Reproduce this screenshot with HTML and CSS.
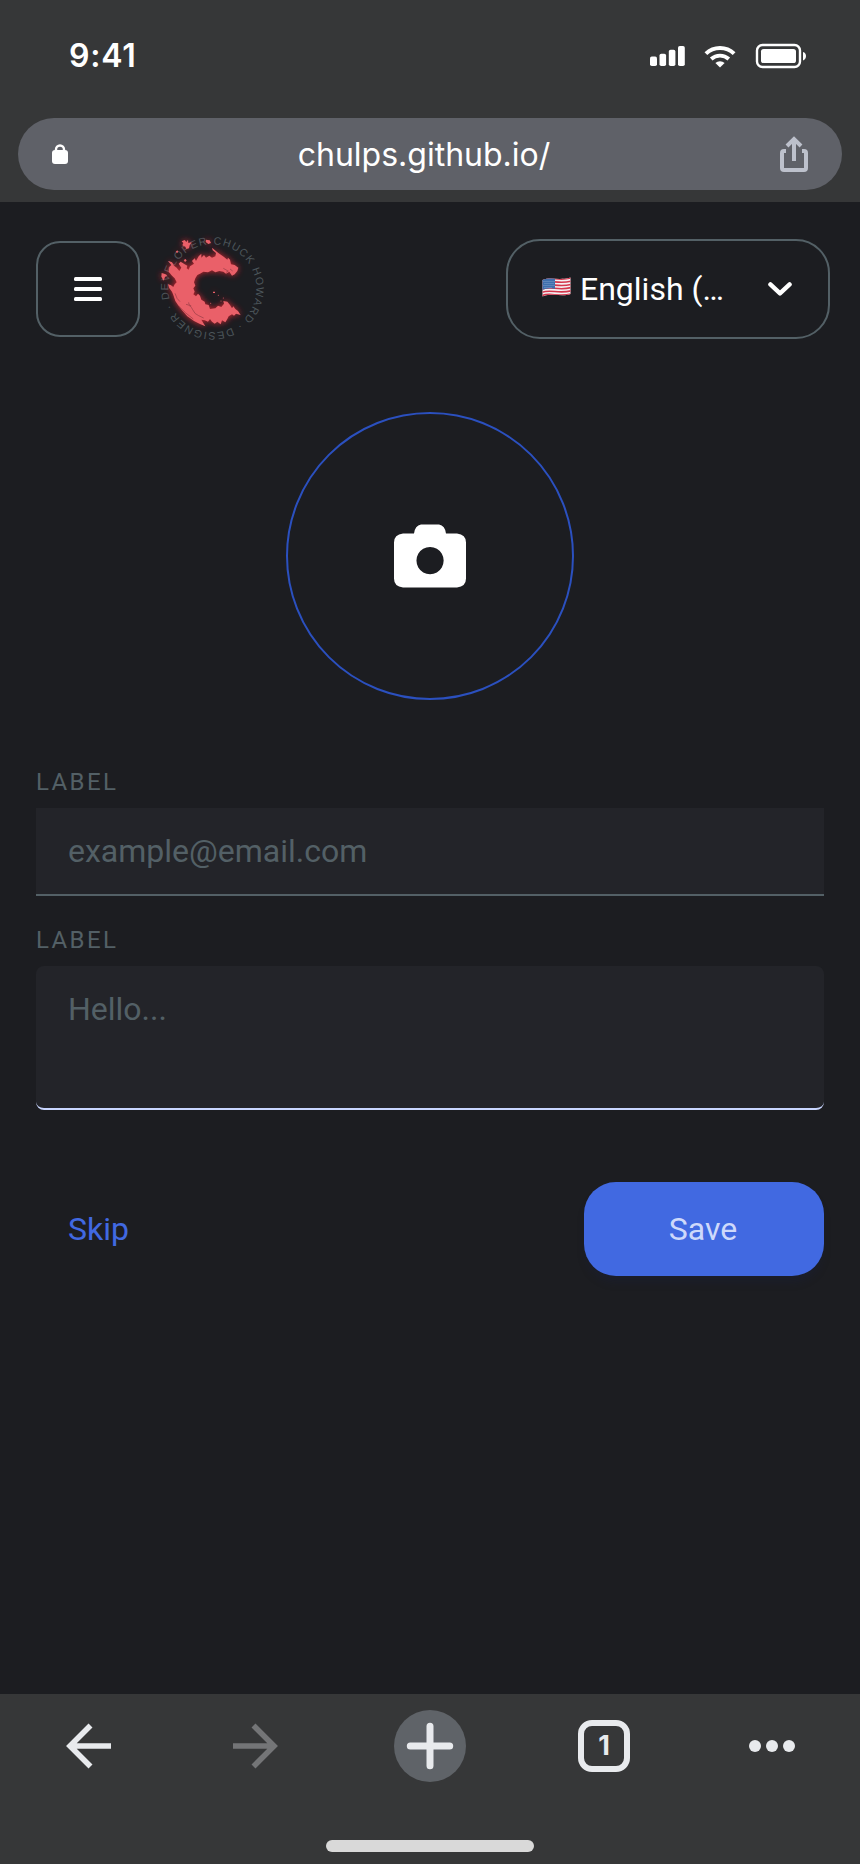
FILE: index.html
```html
<!DOCTYPE html>
<html lang="en">
<head>
<meta charset="utf-8">
<title>chulps.github.io</title>
<link rel="stylesheet" href="styles.css">
</head>
<body>
<div class="phone">
  <header class="browser-top">
    <div class="status">
      <span class="time">9:41</span>
      <svg class="status-icons" width="158" height="28" viewBox="0 0 158 28">
        <g fill="#fff">
          <rect x="0" y="14.6" width="7" height="9.4" rx="1.8"/>
          <rect x="9.5" y="11.8" width="6.6" height="12.2" rx="1.8"/>
          <rect x="18.8" y="7.8" width="6.6" height="16.2" rx="1.8"/>
          <rect x="28" y="4" width="6.8" height="20" rx="1.8"/>
          <path d="M70 25.6l-4.6-4.5a6.6 6.6 0 0 1 9.2 0z"/>
          <rect x="111" y="7" width="35" height="14" rx="2.6"/>
          <path d="M153 10c4 1 4 7.400 0 8.400z"/>
        </g>
        <g fill="none" stroke="#fff">
          <path d="M55.900 11.600a20.600 20.600 0 0 1 28.200 0" stroke-width="4"/>
          <path d="M61.200 17a13 13 0 0 1 17.600 0" stroke-width="3.800"/>
          <rect x="107" y="3" width="43" height="22" rx="5.500" stroke-width="2.400"/>
        </g>
      </svg>
    </div>
    <div class="url-bar">
      <svg width="16" height="20" viewBox="0 0 16 20"><rect y="6" width="16" height="14" rx="3" fill="#fff"/><path d="M4 8V5.500a4 4 0 0 1 8 0V8" fill="none" stroke="#fff" stroke-width="2.400"/></svg>
      <span class="url">chulps.github.io/</span>
      <svg width="28" height="36" viewBox="0 0 28 36" fill="none" stroke="#bdc1cc" stroke-width="4"><path d="M6 15H4q-2 0-2 2v15q0 2 2 2h20q2 0 2-2V17q0-2-2-2h-2M14 25V3M7 10l7-7 7 7"/></svg>
    </div>
  </header>

  <main class="page">
    <nav class="nav">
      <button class="menu" aria-label="Menu"><i></i><i></i><i></i></button>
      <svg class="logo" width="112" height="112" viewBox="18 21 336 336">
        <defs>
          <path id="ring" d="M187 58a132 132 0 1 1-.1 0"/>
          <filter id="glow" x="-30%" y="-30%" width="160%" height="160%"><feGaussianBlur stdDeviation="10"/></filter>
          <g id="splash">
            <path d="M186 68L205 84 222 96 232 104 234 98 240 104 243 118 254 120 265 128 262 138 254 148 246 152 238 140 228 146 220 140 208 138 196 142 186 136 174 142 160 140 150 146 142 150 136 160 132 172 136 182 130 190 134 200 130 208 138 214 144 206 150 212 154 224 164 230 166 238 176 240 180 252 196 250 204 242 214 246 222 236 220 228 232 230 240 240 246 250 250 244 256 252 264 258 272 270 258 266 252 272 246 268 236 274 232 282 226 292 216 286 212 298 202 290 194 296 186 290 180 282 174 290 164 286 154 284 166 304 150 297 132 288 112 274 96 256 84 240 76 228 70 210 66 200 58 190 54 178 62 180 70 186 74 178 80 172 74 160 66 152 56 140 58 126 64 120 54 108 66 112 72 122 80 128 88 138 94 128 86 116 92 110 104 118 112 122 110 130 116 134 120 124 132 116 126 108 134 100 138 108 146 94 154 86 154 98 162 90 168 98 178 92 186 98 196 94 198 84 188 76z"/>
            <path d="M35 144l10 3 7 4-7 5-4 11-7-12zM104 45l5 6 5-7 1 10 10-2-6 9-2 9-8 2-3-7-9-4 3-7-5-5zM168 44l11 2 4 8-8 3-8-6zM77 80l5-4 3 5-4 3zM101 105l6-3 3 5-5 4zM189 200h6v4h-6z"/>
            <circle cx="205" cy="211" r="1.500"/><circle cx="220" cy="219" r="1.500"/><circle cx="213" cy="228" r="1.500"/><circle cx="182" cy="235" r="1.500"/>
          </g>
        </defs>
        <text class="ring-text"><textPath href="#ring" textLength="810" startOffset="3">CHUCK HOWARD · DESIGNER · DEVELOPER</textPath></text>
        <use href="#splash" fill="#ff2834" opacity=".8" filter="url(#glow)"/>
        <use href="#splash" fill="#ea6069"/>
        <g fill="none" stroke="#963d45" stroke-width="2">
          <path d="M108 238q14 2 20 16t18 18l15 7M116 232q-2 8 8 11M86 243q20 22 44 39M75 205q5 18 15 25M220 130l14 8M228 142l8-4M240 132l8 6"/>
        </g>
      </svg>
      <div class="lang">
        <svg width="29" height="20" viewBox="0 0 29 20">
          <defs><clipPath id="wave"><path d="M.5 3C9-.5 16 4 28.500.500V17C20 20.500 12 15.500.500 19.500z"/></clipPath></defs>
          <g clip-path="url(#wave)">
            <path fill="#f4f0f2" d="M0 0h29v20H0z"/>
            <path d="M0 2.500C9-1 16 4.500 29 1M0 5.700C9 2.200 16 7.700 29 4.200M0 8.900C9 5.400 16 10.900 29 7.400M0 12.100C9 8.600 16 14.100 29 10.600M0 15.300C9 11.800 16 17.300 29 13.800M0 18.500C9 15 16 20.500 29 17" fill="none" stroke="#d4364c" stroke-width="1.600"/>
            <path fill="#3f6fad" d="M0 0h13v12C9 10.500 5 11.500 0 13z"/>
            <path d="M1.500 4.500h11M2.500 6.500h10M1.500 8.500h11M2.500 10.500h8" stroke="#89a9cf" stroke-width=".8" stroke-dasharray="1 1"/>
          </g>
        </svg>
        <span class="lang-name">English (…</span>
        <svg width="24" height="14" viewBox="0 0 24 14"><path d="M2.400 2.400L12 11.400l9.600-9" fill="none" stroke="#fff" stroke-width="4.400" stroke-linecap="round" stroke-linejoin="round"/></svg>
      </div>
    </nav>

    <div class="avatar">
      <svg width="72" height="64" viewBox="0 0 72 64"><path fill="#fff" fill-rule="evenodd" d="M27 .5h18q6 1 7 9h11q9 1 9 9v36q0 8-9 9H9q-9-1-9-9V18.500q0-8 9-9h11q1-8 7-9zM36 23a13.600 13.600 0 1 0 .1 0z"/></svg>
    </div>

    <form class="form">
      <label class="label" for="email">LABEL</label>
      <input class="field" id="email" type="text" placeholder="example@email.com">
      <label class="label label-next" for="message">LABEL</label>
      <textarea class="field field-area" id="message" placeholder="Hello..."></textarea>
      <div class="actions">
        <button class="skip" type="button">Skip</button>
        <button class="save" type="button">Save</button>
      </div>
    </form>
  </main>

  <footer class="browser-bottom">
    <div class="tools">
      <svg width="46" height="46" viewBox="0 0 46 46" fill="none" stroke="#e8eaed" stroke-width="5.600"><path d="M45 23H6M24.500 2.500L4 23l20.500 20.500"/></svg>
      <svg class="forward" width="46" height="46" viewBox="0 0 46 46" fill="none" stroke="#747577" stroke-width="5.600"><path d="M1 23h39M21.500 2.500L42 23 21.500 43.500"/></svg>
      <span class="add"><svg width="48" height="48" viewBox="0 0 48 48"><path d="M4.300 24h39.400M24 4.300v39.400" stroke="#e8eaed" stroke-width="7" stroke-linecap="round"/></svg></span>
      <span class="tab">1</span>
      <svg class="more" width="46" height="12" viewBox="0 0 46 12" fill="#e8eaed"><circle cx="6" cy="6" r="6"/><circle cx="23" cy="6" r="6"/><circle cx="40" cy="6" r="6"/></svg>
    </div>
    <div class="home"></div>
  </footer>
</div>
</body>
</html>
```
FILE: styles.css
```css
* { box-sizing: border-box; }
body { margin: 0; background: #1c1d21; }
svg { display: block; flex: none; }
button, input, textarea { font: inherit; color: inherit; margin: 0; border: 0; background: none; }

.phone {
  width: 860px;
  height: 1864px;
  display: flex;
  flex-direction: column;
  background: #1c1d21;
  color: #fff;
  font: 32px/38px Roboto, sans-serif;
}

.browser-top { height: 202px; padding: 0 18px; background: #363738; }
.status {
  height: 118px;
  padding: 0 34px 9px 51px;
  display: flex;
  align-items: center;
  justify-content: space-between;
}
.time { font: 600 32px/38px Inter, sans-serif; letter-spacing: .8px; padding-top: 2px; }
.status-icons { margin-top: 3px; }
.url-bar {
  height: 72px;
  padding: 0 34px;
  border-radius: 36px;
  background: #5f6168;
  display: flex;
  align-items: center;
  justify-content: space-between;
}
.url { font: 400 32px/38px Inter, sans-serif; padding-top: 1px; }

.page { flex: 1; padding: 30px 36px 0; }
.nav { display: flex; align-items: center; height: 112px; margin-right: -6px; }
.menu {
  width: 104px;
  height: 96px;
  padding: 0;
  margin-top: 2px;
  border: 2px solid #536066;
  border-radius: 24px;
  display: flex;
  flex-direction: column;
  align-items: center;
  justify-content: center;
  gap: 6px;
}
.menu i { width: 28px; height: 4px; border-radius: 1.5px; background: #fff; }
.logo { margin-left: 16px; overflow: visible; }
.ring-text { font: 32px "Liberation Sans", sans-serif; fill: #4c565b; }
.lang {
  width: 324px;
  height: 100px;
  margin: 2px 0 0 auto;
  padding: 0 36px 0 34px;
  border: 2px solid #536066;
  border-radius: 34px;
  display: flex;
  align-items: center;
}
.lang > svg:first-child { margin-bottom: 5px; }
.lang-name { flex: 1; padding-left: 9px; white-space: nowrap; }

.avatar {
  width: 288px;
  height: 288px;
  margin: 68px auto 0;
  border: 2px solid #2b50bf;
  border-radius: 50%;
  display: flex;
  align-items: center;
  justify-content: center;
}

.form { margin-top: 68px; display: flex; flex-direction: column; }
.label { font-size: 24px; line-height: 28px; letter-spacing: 2.4px; color: #536066; margin-bottom: 12px; }
.label-next { margin-top: 30px; }
.field {
  display: block;
  width: 788px;
  height: 88px;
  padding: 24px 32px;
  border-bottom: 2px solid #536066;
  border-radius: 0;
  background: #232429;
  outline: 0;
}
.field::placeholder { color: #536066; opacity: 1; }
.field-area { height: 144px; border-bottom-color: #c9d6ff; border-radius: 8px; resize: none; overflow: hidden; }
.actions { display: flex; justify-content: space-between; margin-top: 72px; }
.skip { padding: 0 32px; color: #4169e1; }
.save {
  width: 240px;
  height: 94px;
  padding: 0 2px 0 0;
  border-radius: 32px;
  background: #4169e1;
  color: #ced9fb;
  box-shadow: 0 8px 8px -2px rgba(24, 30, 70, .25);
}

.browser-bottom { height: 170px; background: #363738; }
.tools { height: 104px; padding-left: 65.5px; display: flex; align-items: center; }
.forward { margin-left: 120.5px; }
.add {
  width: 72px;
  height: 72px;
  margin-left: 116px;
  border-radius: 50%;
  background: #5f6368;
  display: grid;
  place-items: center;
}
.tab {
  width: 52px;
  height: 52px;
  margin-left: 112px;
  border: 6px solid #e8eaed;
  border-radius: 14px;
  color: #e8eaed;
  font: 700 27px/40px Inter, sans-serif;
  text-align: center;
}
.more { margin-left: 119px; }
.home { width: 208px; height: 12px; margin: 42px auto 0; border-radius: 6px; background: #d9d9d9; }
```
